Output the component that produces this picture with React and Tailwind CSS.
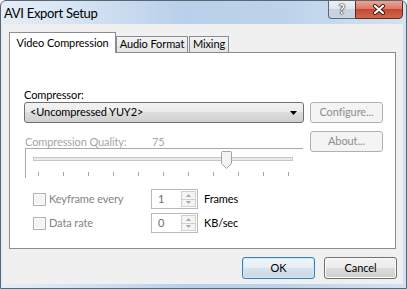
import React from 'react';

const btnGrad =
  'bg-[linear-gradient(#f2f2f2_0%,#ebebeb_50%,#dddddd_50%,#cfcfcf_100%)]';

function Tick() {
  return <div className="w-px h-[4px] bg-[#a8a8a8]" />;
}

function Spin({ value }) {
  return (
    <div className="flex w-[47px] h-[20px] border border-[#b9b9b9] bg-white">
      <div className="flex-1 pl-[6px] leading-[18px] text-[#6d6d6d]">{value}</div>
      <div className="flex flex-col w-[15px] my-[1px] mr-[1px]">
        <div className="flex-1 flex items-center justify-center border border-[#cfcfcf] bg-[#f4f4f4]">
          <svg width="5" height="3" viewBox="0 0 5 3">
            <path d="M0 3 L2.5 0 L5 3 Z" fill="#a9a9a9" />
          </svg>
        </div>
        <div className="flex-1 flex items-center justify-center border border-t-0 border-[#cfcfcf] bg-[#f4f4f4]">
          <svg width="5" height="3" viewBox="0 0 5 3">
            <path d="M0 0 L2.5 3 L5 0 Z" fill="#a9a9a9" />
          </svg>
        </div>
      </div>
    </div>
  );
}

function CheckRow({ label, value, unit, className }) {
  return (
    <div className={'flex items-center h-[20px] ' + className}>
      <div className="flex items-center w-[118px] ml-[9px]">
        <div className="w-[13px] h-[13px] border border-[#b1b1b1] bg-[#f4f4f4] shadow-[inset_0_0_0_1px_#fbfbfb]" />
        <span className="ml-[3px] text-[#838383]">{label}</span>
      </div>
      <Spin value={value} />
      <span className="ml-[6px] text-black">{unit}</span>
    </div>
  );
}

function DisabledButton({ children, className }) {
  return (
    <div
      className={
        'w-[73px] h-[21px] flex items-center justify-center rounded-[3px] border border-[#adb2b5] bg-[#f4f4f4] text-[#8d8d8d] ' +
        className
      }
    >
      {children}
    </div>
  );
}

export default function App() {
  return (
    <div className="w-[407px] h-[289px] flex flex-col border border-[#5b6673] rounded-t-[6px] overflow-hidden bg-[linear-gradient(90deg,#e4eef8_0%,#d6e4f3_18%,#b9d0ea_45%,#bdd3eb_70%,#d3e2f3_100%)] font-[Lato,'Liberation_Sans',sans-serif] text-[11px] tracking-[-0.1px] whitespace-nowrap text-black select-none">
      {/* title bar */}
      <div className="flex h-[23px]">
        <div className="pl-[3px] pt-[3px] text-[13px] tracking-[-0.3px] leading-[18px] text-black">AVI Export Setup</div>
        <div className="ml-auto mr-[3px] -mt-px flex h-[19px]">
          <div className="w-[27px] h-[19px] flex items-center justify-center rounded-bl-[4px] border border-r-0 border-[#5d6874] bg-[linear-gradient(#eef2f7_0%,#dfe6ee_45%,#c8d2dd_50%,#c9d5e2_100%)]">
            <span className="text-white font-bold text-[13px] leading-none [text-shadow:0_0_1px_#222,0_0_1px_#222,0_0_2px_#444]">?</span>
          </div>
          <div className="w-[48px] h-[19px] flex items-center justify-center rounded-br-[4px] border border-[#5d2a20] bg-[linear-gradient(#e9a697_0%,#d97a66_45%,#c44a33_50%,#d0664c_100%)]">
            <svg width="14" height="11" viewBox="0 0 14 11">
              <path d="M3 2 L11 9 M11 2 L3 9" stroke="#3b1610" strokeWidth="4" strokeLinecap="round" />
              <path d="M3 2 L11 9 M11 2 L3 9" stroke="#ffffff" strokeWidth="2.2" strokeLinecap="round" />
            </svg>
          </div>
        </div>
      </div>

      {/* client area */}
      <div className="mx-[2px] w-[400px] h-[260px] bg-[#f0f0f0]">
        <div className="ml-[6px] mt-[8px]">
          {/* tabs */}
          <div className="flex items-end h-[20px]">
            <div className="relative z-10 w-[107px] h-[21px] -mb-px flex items-center justify-center border border-b-0 border-[#898c95] bg-white">
              Video Compression
            </div>
            <div className="w-[72px] h-[16px] flex items-center justify-center border border-b-0 border-[#898c95] bg-[linear-gradient(#f3f3f3,#e4e4e4)]">
              Audio Format
            </div>
            <div className="ml-px w-[40px] h-[16px] flex items-center justify-center border border-b-0 border-[#898c95] bg-[linear-gradient(#f3f3f3,#e4e4e4)]">
              Mixing
            </div>
          </div>

          {/* tab panel */}
          <div className="w-[387px] h-[197px] border border-[#898c95] bg-white pt-[35px] pl-[14px]">
            <div className="h-[14px] leading-[14px]">Compressor:</div>
            <div className="flex h-[21px]">
              <div className={'w-[280px] h-[21px] flex items-center rounded-[3px] border border-[#707070] pl-[5px] pr-[6px] ' + btnGrad}>
                <span className="flex-1">&lt;Uncompressed YUY2&gt;</span>
                <svg width="7" height="4" viewBox="0 0 7 4">
                  <path d="M0 0 L7 0 L3.5 4 Z" fill="#000" />
                </svg>
              </div>
              <DisabledButton className="ml-[6px]">Configure...</DisabledButton>
            </div>

            <div className="flex">
              <div className="w-[280px]">
                <div className="mt-[12px] h-[13px] leading-[13px] pl-px flex text-[#a6a6a6]">
                  <span className="w-[127px]">Compression Quality:</span>
                  <span>75</span>
                </div>
                <div className="relative ml-px w-[278px] h-[30px] border-t border-l border-[#a9a9a9]">
                  <div className="ml-[7px] mt-[8px] w-[260px] h-[4px] border border-[#c6c6c6] bg-[#e9ecec]" />
                  <div className="flex gap-[24px] ml-[12px] mt-[11px]">
                    {Array.from({ length: 11 }).map((_, i) => (
                      <Tick key={i} />
                    ))}
                  </div>
                  <svg className="absolute left-[195px] top-[2px]" width="11" height="18" viewBox="0 0 11 18">
                    <path d="M1.5 0.5 H9.5 Q10.5 0.5 10.5 1.5 V12.5 L5.5 17.5 L0.5 12.5 V1.5 Q0.5 0.5 1.5 0.5 Z" fill="#f4f4f4" stroke="#a3a3a3" />
                  </svg>
                </div>
              </div>
              <DisabledButton className="ml-[6px] mt-[8px]">About...</DisabledButton>
            </div>

            <CheckRow className="mt-[11px]" label="Keyframe every" value="1" unit="Frames" />
            <CheckRow className="mt-[4px]" label="Data rate" value="0" unit="KB/sec" />
          </div>

          {/* buttons */}
          <div className="flex justify-end mt-[8px] mr-[6px]">
            <div className={'w-[73px] h-[22px] flex items-center justify-center rounded-[3px] border border-[#3c7fb1] shadow-[inset_0_0_0_1px_#c8e9fb] bg-[linear-gradient(#f1f6fa_0%,#e6eef5_50%,#d7e3ee_50%,#cbd9e6_100%)]'}>
              OK
            </div>
            <div className={'ml-[9px] w-[73px] h-[22px] flex items-center justify-center rounded-[3px] border border-[#707070] shadow-[inset_0_0_0_1px_#fbfbfb] ' + btnGrad}>
              Cancel
            </div>
          </div>
        </div>
      </div>
    </div>
  );
}
